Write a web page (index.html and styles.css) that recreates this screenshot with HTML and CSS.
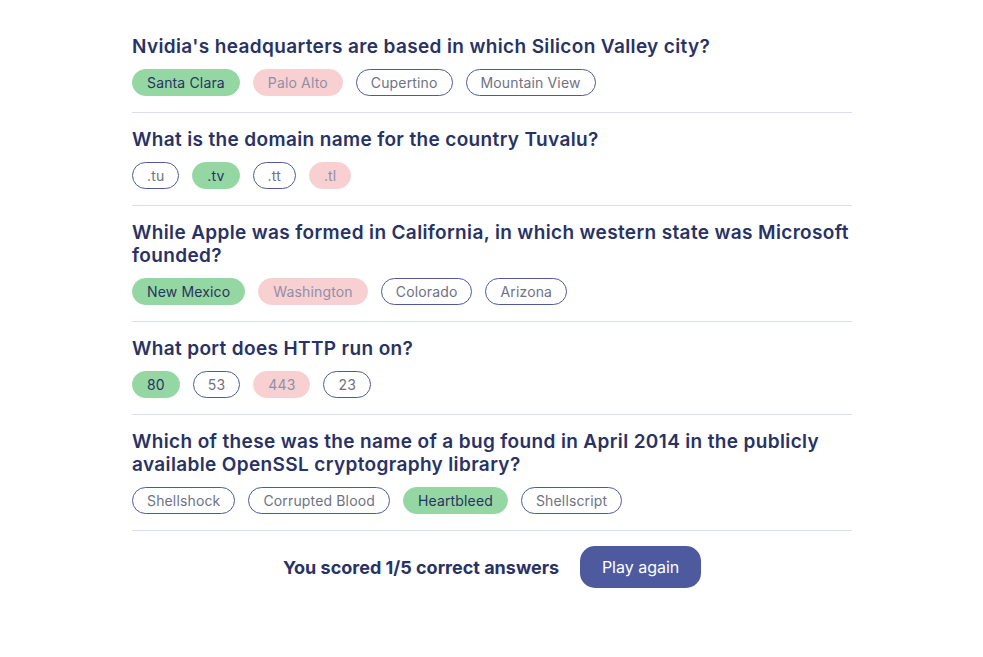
FILE: index.html
```html
<!DOCTYPE html>
<html lang="en">
<head>
<meta charset="utf-8">
<link rel="stylesheet" href="styles.css">
<title>Quizzical</title>
</head>
<body>
<main class="quiz">
  <section class="question">
    <h2 class="q-title">Nvidia's headquarters are based in which Silicon Valley city?</h2>
    <div class="answers">
      <span class="pill correct">Santa Clara</span>
      <span class="pill wrong">Palo Alto</span>
      <span class="pill">Cupertino</span>
      <span class="pill">Mountain View</span>
    </div>
  </section>
  <section class="question">
    <h2 class="q-title">What is the domain name for the country Tuvalu?</h2>
    <div class="answers">
      <span class="pill">.tu</span>
      <span class="pill correct">.tv</span>
      <span class="pill">.tt</span>
      <span class="pill wrong">.tl</span>
    </div>
  </section>
  <section class="question">
    <h2 class="q-title">While Apple was formed in California, in which western state was Microsoft founded?</h2>
    <div class="answers">
      <span class="pill correct">New Mexico</span>
      <span class="pill wrong">Washington</span>
      <span class="pill">Colorado</span>
      <span class="pill">Arizona</span>
    </div>
  </section>
  <section class="question">
    <h2 class="q-title">What port does HTTP run on?</h2>
    <div class="answers">
      <span class="pill correct">80</span>
      <span class="pill">53</span>
      <span class="pill wrong">443</span>
      <span class="pill">23</span>
    </div>
  </section>
  <section class="question">
    <h2 class="q-title">Which of these was the name of a bug found in April 2014 in the publicly available OpenSSL cryptography library?</h2>
    <div class="answers">
      <span class="pill">Shellshock</span>
      <span class="pill">Corrupted Blood</span>
      <span class="pill correct">Heartbleed</span>
      <span class="pill">Shellscript</span>
    </div>
  </section>
  <footer class="result">
    <p class="score">You scored 1/5 correct answers</p>
    <button class="btn">Play again</button>
  </footer>
</main>
</body>
</html>
```

FILE: styles.css
```css
* { box-sizing: border-box; }
html, body { margin: 0; padding: 0; background: #ffffff; }
body { font-family: Inter, "Liberation Sans", sans-serif; color: #293264; }
.quiz {
  width: 720px;
  margin: 0 0 0 132px;
  padding-top: 35px;
}
.question {
  border-bottom: 1px solid #dbdef0;
  padding: 0 0 16px 0;
  margin-bottom: 15px;
}
.q-title {
  margin: 0 0 11px 0;
  font-family: Inter, sans-serif;
  font-weight: 600;
  font-size: 19px;
  line-height: 23px;
  color: #293264;
  letter-spacing: 0.36px;
}
.answers {
  display: flex;
  gap: 13px;
}
.pill {
  display: inline-flex;
  align-items: center;
  height: 27px;
  padding: 0 14px;
  border: 1px solid #4d5b9e;
  border-radius: 14px;
  font-size: 14px;
  letter-spacing: 0.15px;
  color: #6f7282;
}
.pill.correct {
  background: #94d7a2;
  border-color: #94d7a2;
  color: #293264;
}
.pill.wrong {
  background: #f8d0d1;
  border-color: #f8d0d1;
  color: #8f8fa8;
}
.result {
  display: flex;
  justify-content: center;
  align-items: center;
  gap: 21px;
}
.score {
  margin: 0;
  font-weight: 700;
  font-size: 18px;
  color: #293264;
}
.btn {
  height: 42px;
  width: 121px;
  border: none;
  border-radius: 15px;
  background: #4d5b9e;
  color: #ffffff;
  font-family: Inter, sans-serif;
  font-size: 16px;
}
```
